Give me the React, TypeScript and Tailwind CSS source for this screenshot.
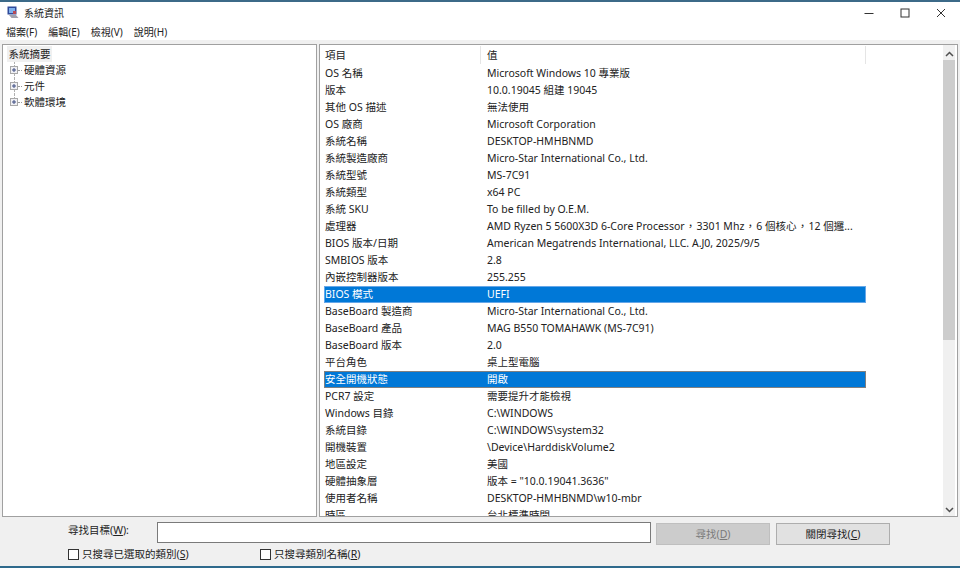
const font = { fontFamily: '"Noto Sans", "Noto Sans CJK TC", sans-serif' };

const rows: [string, string, boolean?, boolean?][] = [
  ["OS 名稱", "Microsoft Windows 10 專業版"],
  ["版本", "10.0.19045 組建 19045"],
  ["其他 OS 描述", "無法使用"],
  ["OS 廠商", "Microsoft Corporation"],
  ["系統名稱", "DESKTOP-HMHBNMD"],
  ["系統製造廠商", "Micro-Star International Co., Ltd."],
  ["系統型號", "MS-7C91"],
  ["系統類型", "x64 PC"],
  ["系統 SKU", "To be filled by O.E.M."],
  ["處理器", "AMD Ryzen 5 5600X3D 6-Core Processor，3301 Mhz，6 個核心，12 個邏..."],
  ["BIOS 版本/日期", "American Megatrends International, LLC. A.J0, 2025/9/5"],
  ["SMBIOS 版本", "2.8"],
  ["內嵌控制器版本", "255.255"],
  ["BIOS 模式", "UEFI", true],
  ["BaseBoard 製造商", "Micro-Star International Co., Ltd."],
  ["BaseBoard 產品", "MAG B550 TOMAHAWK (MS-7C91)"],
  ["BaseBoard 版本", "2.0"],
  ["平台角色", "桌上型電腦"],
  ["安全開機狀態", "開啟", true, true],
  ["PCR7 設定", "需要提升才能檢視"],
  ["Windows 目錄", "C:\\WINDOWS"],
  ["系統目錄", "C:\\WINDOWS\\system32"],
  ["開機裝置", "\\Device\\HarddiskVolume2"],
  ["地區設定", "美國"],
  ["硬體抽象層", "版本 = \"10.0.19041.3636\""],
  ["使用者名稱", "DESKTOP-HMHBNMD\\w10-mbr"],
  ["時區", "台北標準時間"],
];

function Value({ text }: { text: string }) {
  const parts = text.split("，");
  return (
    <span className="whitespace-nowrap pl-[6px]">
      {parts.map((p, i) => (
        <span key={i}>
          {i > 0 && <span className="inline-block w-[12px] text-center">，</span>}
          {p}
        </span>
      ))}
    </span>
  );
}

function TreeItem({ label, last }: { label: string; last?: boolean }) {
  return (
    <div className="flex h-4 items-center">
      <div className="ml-[3px] flex h-4 w-[8px] flex-col items-center">
        <div className="h-1 border-l border-dotted border-[#b0b0b0]" />
        <div className="flex h-[8px] w-[8px] shrink-0 items-center justify-center border border-[#a8a8a8] bg-[#f0f0f4]">
          <svg width="6" height="6" viewBox="0 0 6 6">
            <path d="M1 3h4M3 1v4" stroke="#3a4a80" strokeWidth="1" />
          </svg>
        </div>
        {!last && <div className="h-1 border-l border-dotted border-[#b0b0b0]" />}
      </div>
      <div className="mr-[2px] w-[4px] border-t border-dotted border-[#999]" />
      <span>{label}</span>
    </div>
  );
}

function Check({ label, k }: { label: string; k: string }) {
  return (
    <div className="flex items-center gap-[3px]">
      <div className="h-[11px] w-[11px] border border-[#333] bg-white" />
      <span>
        {label}(<span className="underline">{k}</span>)
      </span>
    </div>
  );
}

export default function App() {
  return (
    <div
      lang="zh-TW"
      style={font}
      className="flex h-[568px] w-[960px] flex-col overflow-hidden border-t-2 border-b-2 border-t-[#3c6a88] border-b-[#2f6a8c] bg-[#f0f0f0] text-[10.5px] leading-none text-[#222222] antialiased"
    >
      <div className="flex h-[21px] shrink-0 items-center bg-white">
        <svg className="ml-[7px]" width="12" height="13" viewBox="0 0 12 13">
          <rect x="0.5" y="0.5" width="9" height="8" fill="#2f4a9a" />
          <rect x="2" y="2" width="6" height="5" fill="#7fb0ec" />
          <path d="M2 9h7l2.5 3H4.5z" fill="#a0a0ac" />
          <rect x="6" y="5" width="3" height="3" fill="#b84a55" />
        </svg>
        <span className="ml-[5px] text-[10px]">系統資訊</span>
        <div className="ml-auto flex items-center">
          <svg width="10" height="10" viewBox="0 0 10 10" className="mr-[26px]">
            <path d="M0.5 5.5h9" stroke="#333" strokeWidth="1" />
          </svg>
          <svg width="10" height="10" viewBox="0 0 10 10" className="mr-[26px]">
            <rect x="1" y="1" width="8" height="8" fill="none" stroke="#333" strokeWidth="1" />
          </svg>
          <svg width="10" height="10" viewBox="0 0 10 10" className="mr-[14px]">
            <path d="M1 1l8 8M9 1l-8 8" stroke="#333" strokeWidth="1" />
          </svg>
        </div>
      </div>
      <div className="flex h-[17px] shrink-0 items-center gap-[11px] bg-white pl-[6px] text-[10px]">
        <span>檔案(F)</span>
        <span>編輯(E)</span>
        <span>檢視(V)</span>
        <span>說明(H)</span>
      </div>
      <div className="flex h-[477px] shrink-0 gap-[2px] pt-[4px] pl-[2px] pr-[2px]">
        <div className="flex w-[315px] flex-col border border-[#a0a0a0] bg-white pl-[4px] pt-[1px]">
          <div className="flex h-4 w-[45px] items-center justify-center bg-[#f0f0f0]">系統摘要</div>
          <TreeItem label="硬體資源" />
          <TreeItem label="元件" />
          <TreeItem label="軟體環境" last />
        </div>
        <div className="flex min-w-0 flex-1 overflow-hidden border border-[#a0a0a0] bg-white">
          <div className="flex w-[623px] shrink-0 flex-col overflow-hidden">
            <div className="grid h-[20px] shrink-0 grid-cols-[161px_385px_1fr] items-stretch pb-[1px] pt-[1px]">
              <div className="flex items-center border-r border-[#e5e5e5] pl-[5px]">項目</div>
              <div className="flex items-center border-r border-[#e5e5e5] pl-[6px]">值</div>
              <div />
            </div>
            {rows.map(([a, b, sel, focus]) => (
              <div
                key={a}
                className={
                  "ml-[4px] grid h-[17px] w-[542px] shrink-0 grid-cols-[157px_1fr] items-center " +
                  (sel ? "bg-[#0078d7] text-white outline outline-1 -outline-offset-1 " : "") +
                  (sel ? (focus ? "outline-[#808080]" : "outline-[#66a7e8]") : "")
                }
              >
                <span className="whitespace-nowrap pl-[1px]">{a}</span>
                <Value text={b} />
              </div>
            ))}
          </div>
          <div className="mr-[1px] flex w-[12px] shrink-0 flex-col bg-[#f0f0f0] pt-[2px]">
            <div className="flex h-[13px] shrink-0 items-center justify-center">
              <svg width="9" height="6" viewBox="0 0 9 6">
                <path d="M1 5l3.5-3.5L8 5" fill="none" stroke="#505050" strokeWidth="1.5" />
              </svg>
            </div>
            <div className="h-[280px] shrink-0 bg-[#cdcdcd]" />
            <div className="flex-1" />
            <div className="flex h-[13px] shrink-0 items-center justify-center">
              <svg width="9" height="6" viewBox="0 0 9 6">
                <path d="M1 1l3.5 3.5L8 1" fill="none" stroke="#505050" strokeWidth="1.5" />
              </svg>
            </div>
          </div>
        </div>
      </div>
      <div className="flex flex-1 flex-col">
        <div className="mt-[5px] flex h-[23px] items-start">
          <span className="ml-[68px] mt-[3px] w-[89px]">
            尋找目標(<span className="underline">W</span>):
          </span>
          <div className="h-[21px] w-[494px] border border-[#7a7a7a] bg-white" />
          <div className="ml-[5px] mt-[1px] flex h-[22px] w-[114px] items-center justify-center border border-[#bfbfbf] bg-[#cccccc] text-[#7a7a7a]">
            尋找(<span className="underline">D</span>)
          </div>
          <div className="ml-[6px] mt-[1px] flex h-[22px] w-[114px] items-center justify-center border border-[#adadad] bg-[#e1e1e1]">
            關閉尋找(<span className="underline">C</span>)
          </div>
        </div>
        <div className="mt-[4px] flex">
          <div className="ml-[68px] w-[192px]">
            <Check label="只搜尋已選取的類別" k="S" />
          </div>
          <Check label="只搜尋類別名稱" k="R" />
        </div>
      </div>
    </div>
  );
}
